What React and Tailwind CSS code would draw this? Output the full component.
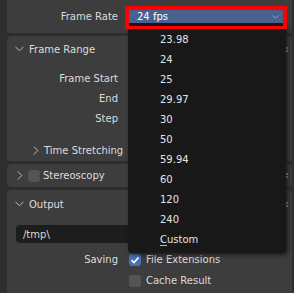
import React from "react"

const FONT = { fontFamily: '"DejaVu Sans", "Liberation Sans", sans-serif' }

const rates = ["23.98", "24", "25", "29.97", "30", "50", "59.94", "60", "120", "240"]

function ChevronDown({ className = "" }) {
  return (
    <svg width="9" height="6" viewBox="0 0 9 6" className={className}>
      <polyline points="0.5,0.8 4.5,4.8 8.5,0.8" fill="none" stroke="#b8b8b8" strokeWidth="1" />
    </svg>
  )
}

function ChevronRight({ className = "" }) {
  return (
    <svg width="6" height="9" viewBox="0 0 6 9" className={className}>
      <polyline points="0.8,0.5 4.8,4.5 0.8,8.5" fill="none" stroke="#b8b8b8" strokeWidth="1" />
    </svg>
  )
}

function Grip() {
  return (
    <div className="ml-auto mr-[4px] flex flex-col gap-[1px]">
      <div className="w-[2px] h-[2px] bg-[#8a8a8a]" />
      <div className="w-[2px] h-[2px] bg-[#8a8a8a]" />
    </div>
  )
}

function PropRow({ label, h = "h-[20px]" }) {
  return (
    <div className={`flex items-center ${h}`}>
      <div className="w-[111px] text-right pr-[0px]">{label}</div>
    </div>
  )
}

function Checkbox({ checked }) {
  return checked ? (
    <div className="w-[12px] h-[12px] rounded-[3px] bg-[#4772b3] flex items-center justify-center">
      <svg width="10" height="10" viewBox="0 0 10 10">
        <polyline points="1.5,5.2 4,7.6 8.6,2.2" fill="none" stroke="#ffffff" strokeWidth="1.6" />
      </svg>
    </div>
  ) : (
    <div className="w-[12px] h-[12px] rounded-[3px] bg-[#545454]" />
  )
}

export default function App() {
  return (
    <div
      className="relative w-[294px] h-[293px] overflow-hidden bg-[#2e2e2e] text-[10px] text-[#dcdcdc]"
      style={FONT}
    >
      <div className="flex flex-col gap-[3px] pl-[7px] pr-[2px]">
        {/* Frame Rate panel (continued from above) */}
        <div className="h-[33px] bg-[#3d3d3d] rounded-b-[4px] flex items-start">
          <div className="flex items-center mt-[8px] h-[16px]">
            <div className="w-[111px] text-right">Frame Rate</div>
            <div className="ml-[11px] self-start mt-[2px] w-[154px] h-[13px] bg-[#47628f] rounded-t-[3px] flex items-center pl-[8px] text-white">
              24 fps
            </div>
          </div>
        </div>

        {/* Frame Range */}
        <div className="h-[125px] bg-[#3d3d3d] rounded-[4px] flex flex-col">
          <div className="h-[26px] flex items-center">
            <ChevronDown className="ml-[8px]" />
            <span className="ml-[5px]">Frame Range</span>
            <Grip />
          </div>
          <div className="mt-[6.5px]">
            <PropRow label="Frame Start" />
            <PropRow label="End" />
            <PropRow label="Step" />
          </div>
          <div className="mt-[11.5px] h-[20px] flex items-center">
            <ChevronRight className="ml-[26px]" />
            <span className="ml-[5px]">Time Stretching</span>
          </div>
        </div>

        {/* Stereoscopy */}
        <div className="h-[23px] bg-[#3d3d3d] rounded-[4px] flex items-center">
          <ChevronRight className="ml-[10px]" />
          <div className="ml-[5px]">
            <Checkbox checked={false} />
          </div>
          <span className="ml-[3px]">Stereoscopy</span>
          <Grip />
        </div>

        {/* Output */}
        <div className="h-[110px] bg-[#3d3d3d] rounded-t-[4px] flex flex-col">
          <div className="h-[28px] flex items-center">
            <ChevronDown className="ml-[8px]" />
            <span className="ml-[5px]">Output</span>
            <Grip />
          </div>
          <div className="mt-[7px] ml-[9px] mr-[8px] h-[18px] rounded-[4px] bg-[#1d1d1d] flex items-center pl-[7px]">
            /tmp\
          </div>
          <div className="mt-[6px] h-[21px] flex items-center">
            <div className="w-[111px] text-right">Saving</div>
            <div className="ml-[11px]">
              <Checkbox checked />
            </div>
            <span className="ml-[5px]">File Extensions</span>
          </div>
          <div className="h-[21px] flex items-center">
            <div className="ml-[122px]">
              <Checkbox checked={false} />
            </div>
            <span className="ml-[5px]">Cache Result</span>
          </div>
        </div>
      </div>

      {/* open dropdown menu */}
      <div className="absolute left-[128px] top-[23px] w-[158px] h-[230px] bg-[#181818] rounded-b-[4px] shadow-[2px_2px_4px_rgba(0,0,0,0.55)] pt-[6px] text-[#e4e4e4]">
        {rates.map((r) => (
          <div key={r} className="h-[20px] flex items-center pl-[32px]">
            {r}
          </div>
        ))}
        <div className="h-[20px] flex items-center pl-[32px]">
          <span className="underline underline-offset-[2px] decoration-[#bdbdbd]">C</span>ustom
        </div>
      </div>

      {/* button again above menu */}
      <div className="absolute left-[129px] top-[10px] w-[154px] h-[13px] bg-[#47628f] flex items-center pl-[8px] text-white">
        24 fps
        <ChevronDown className="ml-auto mr-[3px] scale-75" />
      </div>

      {/* red highlight */}
      <div className="absolute left-[125px] top-[6px] w-[162px] h-[23px] border-x-4 border-t-4 border-b-[3px] border-[#ff0000]" />
    </div>
  )
}
